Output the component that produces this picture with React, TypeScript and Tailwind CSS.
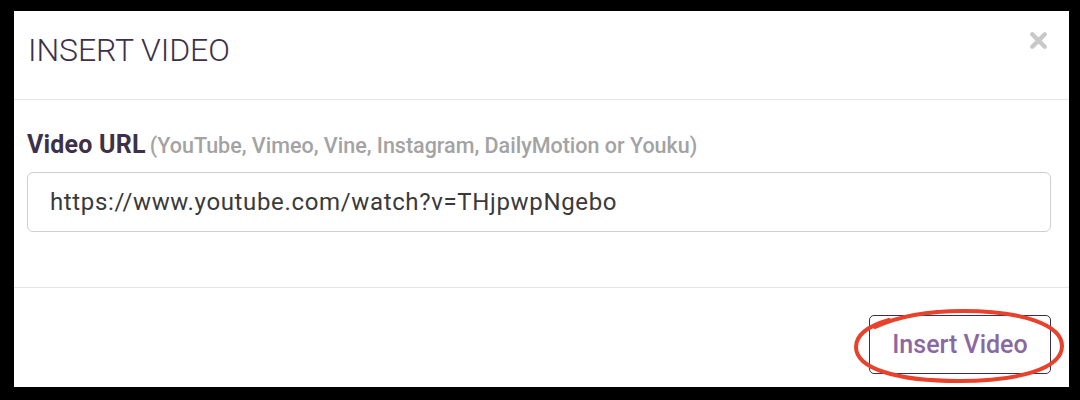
import { X } from "lucide-react";

const font = { fontFamily: "Roboto, 'Noto Sans', sans-serif" };

const RedCircle = () => (
  <svg
    className="absolute left-[-16px] top-[-7px] pointer-events-none"
    width="214"
    height="76"
    viewBox="0 0 214 76"
  >
    <path
      d="M22 19 C48 7 80 3 110 3 C170 3 209 17 209 38 C209 61 165 73 106 73 C45 73 3 61 3 39 C3 27 15 18 36 12"
      fill="none"
      stroke="#e8412c"
      strokeWidth="4"
      strokeLinecap="round"
    />
  </svg>
);

export default function App() {
  return (
    <div
      className="w-[1080px] h-[400px] bg-black pt-[11px] pl-[14px] pr-[11px] pb-[13px]"
      style={font}
    >
      <div className="w-full h-full bg-white flex flex-col">
        <div className="h-[89px] flex items-start justify-between border-b border-[#e5e5e5] pl-[14px] pr-[18px]">
          <h4 className="mt-[19px] text-[32px] font-light text-[#3d3148] leading-[40px] tracking-[-0.1px]">
            INSERT VIDEO
          </h4>
          <button className="mt-[17px] text-[#c8c8c8]">
            <X size={25} strokeWidth={4.2} />
          </button>
        </div>
        <div className="h-[188px] border-b border-[#e5e5e5] pl-[13px] pr-[18px] pt-[30px]">
          <label className="block leading-[30px]">
            <span className="text-[25px] font-bold text-[#3d3148] tracking-[0.2px]">
              Video URL
            </span>{" "}
            <span className="text-[21.5px] font-medium text-[#a3a3a3]">
              (YouTube, Vimeo, Vine, Instagram, DailyMotion or Youku)
            </span>
          </label>
          <input
            readOnly
            value="https://www.youtube.com/watch?v=THjpwpNgebo"
            className="mt-[9px] w-full h-[60px] rounded-[6px] border border-[#cfcfcf] px-[22px] text-[24px] tracking-[0.65px] text-[#3a3a3a] outline-none"
            style={font}
          />
        </div>
        <div className="flex-1 flex justify-end items-start pr-[18px] pt-[27px]">
          <div className="relative">
            <button className="w-[182px] h-[59px] rounded-[5px] border border-[#3b2f4a] text-[25px] font-medium text-[#8a69a3]">
              Insert Video
            </button>
            <RedCircle />
          </div>
        </div>
      </div>
    </div>
  );
}
